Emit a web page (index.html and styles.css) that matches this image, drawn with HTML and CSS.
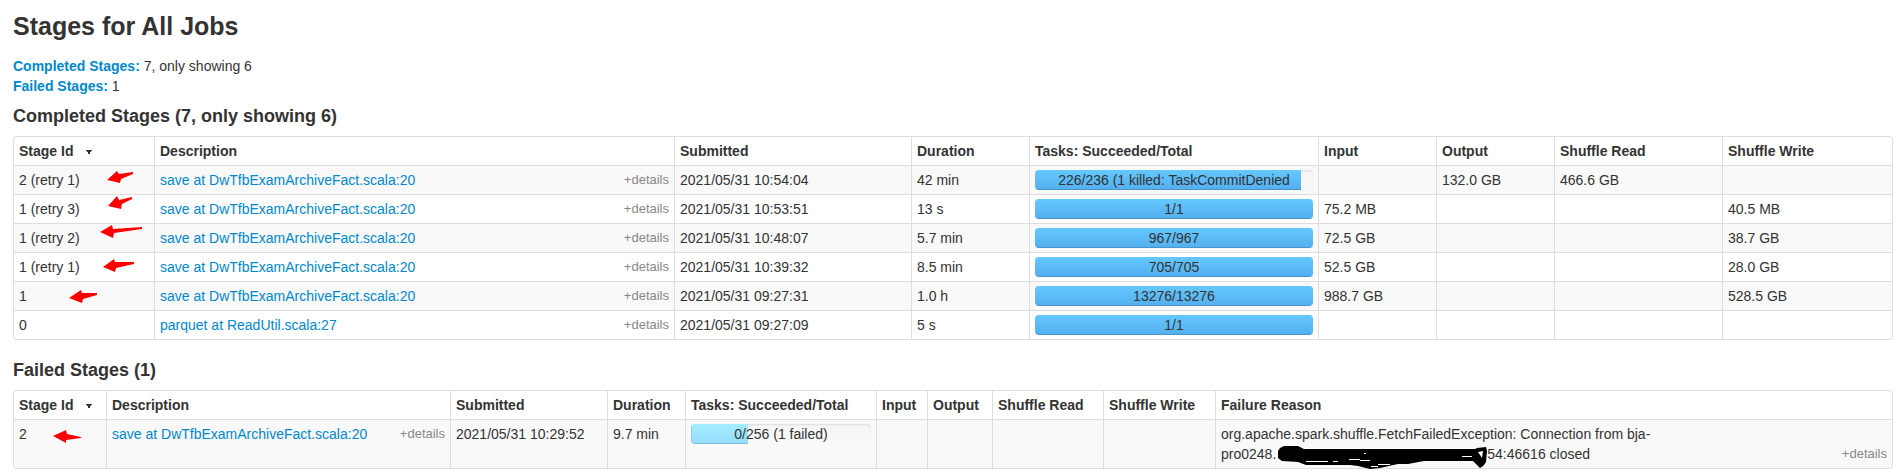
FILE: index.html
```html
<!DOCTYPE html>
<html lang="en">
<head>
<meta charset="utf-8">
<title>Stages for All Jobs</title>
<link rel="stylesheet" href="styles.css">
</head>
<body>
<main class="page">
<h1 class="page-title">Stages for All Jobs</h1>
<ul class="summary">
<li><a href="#completed"><strong>Completed Stages:</strong></a> 7, only showing 6</li>
<li><a href="#failed"><strong>Failed Stages:</strong></a> 1</li>
</ul>

<h2 class="section-title" id="completed">Completed Stages (7, only showing 6)</h2>
<div class="table-wrap">
<table class="stages">
<colgroup><col class="c-id"><col><col class="c-submitted"><col class="c-size"><col class="c-tasks"><col class="c-size"><col class="c-size"><col class="c-read"><col class="c-write"></colgroup>
<thead>
<tr><th>Stage Id <svg class="sort" viewBox="0 0 6 5"><path d="M0 0h6v1H5v1H4v2H2V2H1V1H0z"/></svg></th><th>Description</th><th>Submitted</th><th>Duration</th><th>Tasks: Succeeded/Total</th><th>Input</th><th>Output</th><th>Shuffle Read</th><th>Shuffle Write</th></tr>
</thead>
<tbody>
<tr><td>2 (retry 1)</td><td><div class="desc"><a href="#s2r1">save at DwTfbExamArchiveFact.scala:20</a><span class="details">+details</span></div></td><td>2021/05/31 10:54:04</td><td>42 min</td><td><div class="progress"><span class="label">226/236 (1 killed: TaskCommitDenied</span><div class="bar done" style="width:95.76%"></div></div></td><td></td><td>132.0 GB</td><td>466.6 GB</td><td></td></tr>
<tr><td>1 (retry 3)</td><td><div class="desc"><a href="#s1r3">save at DwTfbExamArchiveFact.scala:20</a><span class="details">+details</span></div></td><td>2021/05/31 10:53:51</td><td>13 s</td><td><div class="progress"><span class="label">1/1</span><div class="bar done" style="width:100%"></div></div></td><td>75.2 MB</td><td></td><td></td><td>40.5 MB</td></tr>
<tr><td>1 (retry 2)</td><td><div class="desc"><a href="#s1r2">save at DwTfbExamArchiveFact.scala:20</a><span class="details">+details</span></div></td><td>2021/05/31 10:48:07</td><td>5.7 min</td><td><div class="progress"><span class="label">967/967</span><div class="bar done" style="width:100%"></div></div></td><td>72.5 GB</td><td></td><td></td><td>38.7 GB</td></tr>
<tr><td>1 (retry 1)</td><td><div class="desc"><a href="#s1r1">save at DwTfbExamArchiveFact.scala:20</a><span class="details">+details</span></div></td><td>2021/05/31 10:39:32</td><td>8.5 min</td><td><div class="progress"><span class="label">705/705</span><div class="bar done" style="width:100%"></div></div></td><td>52.5 GB</td><td></td><td></td><td>28.0 GB</td></tr>
<tr><td>1</td><td><div class="desc"><a href="#s1">save at DwTfbExamArchiveFact.scala:20</a><span class="details">+details</span></div></td><td>2021/05/31 09:27:31</td><td>1.0 h</td><td><div class="progress"><span class="label">13276/13276</span><div class="bar done" style="width:100%"></div></div></td><td>988.7 GB</td><td></td><td></td><td>528.5 GB</td></tr>
<tr><td>0</td><td><div class="desc"><a href="#s0">parquet at ReadUtil.scala:27</a><span class="details">+details</span></div></td><td>2021/05/31 09:27:09</td><td>5 s</td><td><div class="progress"><span class="label">1/1</span><div class="bar done" style="width:100%"></div></div></td><td></td><td></td><td></td><td></td></tr>
</tbody>
</table>
<svg class="marks" width="141" height="204" viewBox="13 136 141 204">
<path d="M107 180 117 171 119 174 133 172 133 174 121 179 120 183z"/>
<path d="M108 206 117 196 119 200 132 197 132 199 122 204 121 209z"/>
<path d="M100 232 112 225 113 229 142 227 142 229 114 233 113 238z"/>
<path d="M103 267 114 259 115 262 134 262 134 264 116 268 115 272z"/>
<path d="M69 298 81 290 82 293 97 293 97 295 83 299 82 303z"/>
</svg>
</div>

<h2 class="section-title" id="failed">Failed Stages (1)</h2>
<div class="table-wrap">
<table class="stages">
<colgroup><col class="f-id"><col class="f-desc"><col class="f-submitted"><col class="f-duration"><col class="f-tasks"><col class="f-input"><col class="f-output"><col class="f-read"><col class="f-write"><col></colgroup>
<thead>
<tr><th>Stage Id <svg class="sort" viewBox="0 0 6 5"><path d="M0 0h6v1H5v1H4v2H2V2H1V1H0z"/></svg></th><th>Description</th><th>Submitted</th><th>Duration</th><th>Tasks: Succeeded/Total</th><th>Input</th><th>Output</th><th>Shuffle Read</th><th>Shuffle Write</th><th>Failure Reason</th></tr>
</thead>
<tbody>
<tr><td>2</td><td><div class="desc"><a href="#s2">save at DwTfbExamArchiveFact.scala:20</a><span class="details">+details</span></div></td><td>2021/05/31 10:29:52</td><td>9.7 min</td><td><div class="progress"><span class="label">0/256 (1 failed)</span><div class="bar running" style="width:31.6%"></div></div></td><td></td><td></td><td></td><td></td><td>org.apache.spark.shuffle.FetchFailedException: Connection from bja-<div class="desc"><span>pro0248.<span class="redacted"><svg class="scribble" width="210" height="24" viewBox="0 0 210 24"><path d="M2 2 6 0H20L26 3H197L199 2 208 1 209 5 208 16 206 19 205 20 202 22 198 18 195 15H146L130 18 120 18 102 22 92 23 80 20 72 19H28L20 16 4 15 0 12V5z"/><path class="gap" d="M28 15.5H50M55 15.5H60M71 13.5H82M82 14.5H92M93 20.5H100M100 18.5H112M86 7.5H88M184 10.5H194"/><path class="fleck" d="M200 6 205 5 204 12z"/></svg></span>54:46616 closed</span><span class="details">+details</span></div></td></tr>
</tbody>
</table>
<svg class="marks" width="93" height="78" viewBox="13 390 93 78">
<path d="M53 436 66 430 67 434 81 437 81 438 66 440 66 443z"/>
</svg>
</div>
</main>
</body>
</html>
```

FILE: styles.css
```css
body {
  margin: 0;
  background: #fff;
  color: #333;
  font: 14px/20px "Liberation Sans", Arial, sans-serif;
}
.page { padding: 6px 11px 0 13px; }
.page-title { margin: 0 0 10px; font-size: 25px; line-height: 40px; }
.summary { margin: 0 0 10px; padding: 0; list-style: none; }
.section-title { margin: 0 0 10px; font-size: 18px; line-height: 20px; }
a { color: #08c; text-decoration: none; }

.table-wrap { position: relative; margin-bottom: 20px; }
.stages {
  width: 100%;
  table-layout: fixed;
  border: 1px solid #ddd;
  border-left: 0;
  border-collapse: separate;
  border-spacing: 0;
  border-radius: 4px;
}
.stages th, .stages td {
  box-sizing: border-box;
  padding: 4px 5px;
  border-left: 1px solid #ddd;
  text-align: left;
  vertical-align: top;
  white-space: nowrap;
}
.stages td { border-top: 1px solid #ddd; }
.stages tbody tr:nth-child(odd) td { background: #f9f9f9; }
.stages th:first-child { border-top-left-radius: 4px; }
.stages tr:last-child td:first-child { border-bottom-left-radius: 4px; }
.stages tr:last-child td:last-child { border-bottom-right-radius: 4px; }

.c-id { width: 141px; }
.c-submitted { width: 237px; }
.c-size { width: 118px; }
.c-tasks { width: 289px; }
.c-read { width: 168px; }
.c-write { width: 170px; }
.f-id { width: 93px; }
.f-desc { width: 344px; }
.f-submitted { width: 157px; }
.f-duration { width: 78px; }
.f-tasks { width: 191px; }
.f-input { width: 51px; }
.f-output { width: 65px; }
.f-read { width: 111px; }
.f-write { width: 112px; }

.sort { width: 6px; height: 5px; margin-left: 9px; vertical-align: 1px; fill: #333; }
.desc { display: flex; justify-content: space-between; }
.details { color: #888; font-size: 13px; }

.progress {
  position: relative;
  height: 20px;
  overflow: hidden;
  border-radius: 4px;
  background: linear-gradient(#f5f5f5, #f9f9f9);
  box-shadow: inset 0 1px 2px rgba(0, 0, 0, 0.1);
}
.label { position: absolute; inset: 0; text-align: center; }
.bar { height: 100%; box-shadow: inset 0 -1px 0 rgba(0, 0, 0, 0.15); }
.done { background: linear-gradient(#64c8ff, #54aeef); }
.running { background: linear-gradient(#a4edff, #94ddff); box-shadow: inset 0 -1px 0 rgba(0, 0, 0, 0.15), inset 1px 0 0 rgba(0, 0, 0, 0.1); }

.marks { position: absolute; top: 0; left: 0; fill: #f00; pointer-events: none; }
.redacted { display: inline-block; position: relative; width: 210px; height: 14px; margin-left: 1px; vertical-align: top; }
.scribble { position: absolute; top: 2px; left: 1px; }
.gap { fill: none; stroke: #fff; }
.fleck { fill: #fff; }
```
